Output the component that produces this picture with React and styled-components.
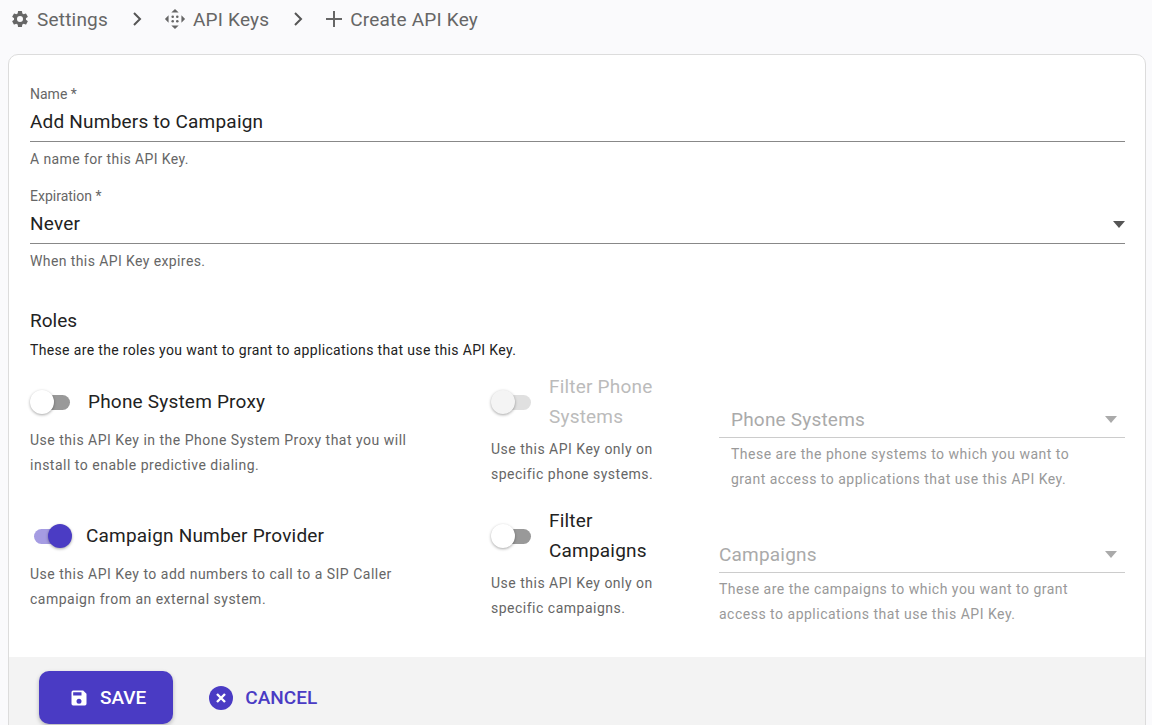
import React from 'react'
import styled, { createGlobalStyle } from 'styled-components'

const Global = createGlobalStyle`
  body { margin: 0; background: #fafafc; font-family: Roboto, "Liberation Sans", sans-serif; }
`

const Crumbs = styled.div`
  display: flex;
  align-items: center;
  height: 38px;
  padding-left: 10px;
  font-size: 19px;
  color: #666;
  gap: 8px;
  letter-spacing: 0.2px;
`
const Crumb = styled.span`
  display: flex;
  align-items: center;
  gap: 7px;
`
const Sep = styled.span`
  margin: 0 14px 0 16px;
  display: flex;
`

const Card = styled.div`
  margin: 16px 6px 10px 8px;
  border: 1px solid #dcdcdc;
  border-radius: 10px;
  background: #fff;
  overflow: hidden;
`
const Body = styled.div`
  padding: 29px 20px 30px 21px;
`
const Label = styled.div`
  font-size: 14px;
  color: #666;
  line-height: 20px;
  margin-bottom: 5px;
`
const Value = styled.div`
  font-size: 19px;
  color: #222;
  line-height: 26px;
  padding-bottom: 6px;
  border-bottom: 1px solid #888;
  display: flex;
  justify-content: space-between;
  align-items: center;
  letter-spacing: 0.2px;
`
const Helper = styled.div`
  font-size: 14px;
  color: #666;
  letter-spacing: 0.4px;
  margin-top: 7px;
  line-height: 20px;
  margin-bottom: ${p => p.$mb || 0}px;
`
const Heading = styled.div`
  font-size: 19px;
  color: #222;
  margin-top: 38px;
`
const Desc = styled.div`
  font-size: 14px;
  color: #222;
  margin-top: 10px;
  letter-spacing: 0.35px;
`
const Grid = styled.div`
  display: grid;
  grid-template-columns: 461px 228px 1fr;
  row-gap: 14px;
  margin-top: 14px;
`
const SwitchRow = styled.div`
  display: flex;
  align-items: center;
  gap: 18px;
  min-height: 60px;
  font-size: 19px;
  color: ${p => (p.$disabled ? '#bbb' : '#222')};
  line-height: 30px;
  letter-spacing: 0.2px;
`
const Track = styled.div`
  position: relative;
  width: 34px;
  height: 15px;
  border-radius: 8px;
  margin-left: ${p => (p.$on ? 4 : 6)}px;
  flex-shrink: 0;
  background: ${p => (p.$on ? '#a59ce2' : p.$disabled ? '#e0e0e0' : '#999')};
`
const Thumb = styled.div`
  position: absolute;
  top: -5px;
  left: ${p => (p.$on ? 14 : -6)}px;
  width: 24px;
  height: 24px;
  border-radius: 50%;
  background: ${p => (p.$on ? '#4b3cc4' : p.$disabled ? '#f4f4f4' : '#fff')};
  box-shadow: 0 1px 3px rgba(0,0,0,0.35);
`
const SmallText = styled.div`
  font-size: 14px;
  color: ${p => (p.$disabled ? '#999' : '#666')};
  letter-spacing: 0.5px;
  line-height: 25px;
  margin-top: ${p => p.$mt || 0}px;
  padding-left: ${p => p.$pl || 0}px;
`
const Col = styled.div``
const SelectBox = styled.div`
  margin-top: ${p => p.$mt || 36}px;
  padding: 0 8px 6px ${p => p.$pl || 0}px;
  border-bottom: 1px solid #ccc;
  font-size: 19px;
  color: #aaa;
  display: flex;
  justify-content: space-between;
  align-items: center;
  letter-spacing: 0.2px;
`
const Footer = styled.div`
  background: #f3f3f3;
  padding: 14px 30px 13px 30px;
  display: flex;
  align-items: center;
  gap: 30px;
`
const SaveBtn = styled.button`
  display: flex;
  align-items: center;
  gap: 11px;
  height: 53px;
  padding: 0 27px 0 30px;
  background: #4a3bc4;
  color: #fff;
  border: 0;
  border-radius: 10px;
  font: 500 19px Roboto, sans-serif;
  box-shadow: 0 2px 4px rgba(0,0,0,0.25);
`
const CancelBtn = styled.button`
  display: flex;
  align-items: center;
  gap: 12px;
  background: none;
  border: 0;
  color: #4a3bc4;
  font: 500 19px Roboto, sans-serif;
`

const Caret = ({ color = '#555' }) => (
  <svg width="12" height="7" viewBox="0 0 12 7"><path d="M0 0h12L6 7z" fill={color} /></svg>
)
const Chevron = () => (
  <svg width="10" height="14" viewBox="0 0 10 14"><path d="M2 1l6 6-6 6" stroke="#555" strokeWidth="2" fill="none" /></svg>
)

const Switch = ({ on, disabled }) => (
  <Track $on={on} $disabled={disabled}><Thumb $on={on} $disabled={disabled} /></Track>
)

export default function App() {
  return (
    <>
      <Global />
      <Crumbs>
        <Crumb>
          <svg width="20" height="20" viewBox="0 0 24 24" fill="#666"><path d="M19.14 12.94c.04-.3.06-.61.06-.94 0-.32-.02-.64-.07-.94l2.03-1.58a.49.49 0 0 0 .12-.61l-1.92-3.32a.49.49 0 0 0-.59-.22l-2.39.96c-.5-.38-1.030-.7-1.62-.94l-.36-2.54a.48.48 0 0 0-.48-.41h-3.84c-.24 0-.43.17-.47.41l-.36 2.54c-.59.24-1.13.57-1.62.94l-2.39-.96a.48.48 0 0 0-.59.22L2.74 8.87c-.12.21-.08.47.12.61l2.03 1.58c-.05.3-.09.63-.09.94s.02.64.07.94l-2.03 1.58a.49.49 0 0 0-.12.61l1.92 3.320c.12.22.37.29.59.22l2.39-.96c.5.38 1.03.7 1.62.94l.36 2.54c.05.24.24.41.48.41h3.84c.24 0 .44-.17.47-.41l.36-2.54c.59-.24 1.13-.56 1.62-.94l2.39.96c.22.08.47 0 .59-.22l1.92-3.32c.12-.22.07-.47-.12-.61l-2.01-1.58zM12 15.6A3.6 3.6 0 1 1 12 8.4a3.6 3.6 0 0 1 0 7.2z"/></svg>
          Settings
        </Crumb>
        <Sep><Chevron /></Sep>
        <Crumb>
          <svg width="22" height="22" viewBox="0 0 24 24" fill="#666"><path d="M12 1l4 4h-8zM12 23l-4-4h8zM1 12l4-4v8zM23 12l-4 4V8z"/><circle cx="9.5" cy="9.5" r="1.4"/><circle cx="14.5" cy="9.5" r="1.4"/><circle cx="9.5" cy="14.5" r="1.4"/><circle cx="14.5" cy="14.5" r="1.4"/></svg>
          API Keys
        </Crumb>
        <Sep><Chevron /></Sep>
        <Crumb>
          <svg width="18" height="18" viewBox="0 0 18 18"><path d="M9 1v16M1 9h16" stroke="#666" strokeWidth="2" /></svg>
          Create API Key
        </Crumb>
      </Crumbs>
      <Card>
        <Body>
          <Label>Name *</Label>
          <Value>Add Numbers to Campaign</Value>
          <Helper $mb={17}>A name for this API Key.</Helper>
          <Label>Expiration *</Label>
          <Value>Never<Caret /></Value>
          <Helper>When this API Key expires.</Helper>
          <Heading>Roles</Heading>
          <Desc>These are the roles you want to grant to applications that use this API Key.</Desc>
          <Grid>
            <Col>
              <SwitchRow><Switch />Phone System Proxy</SwitchRow>
              <SmallText $mt={-4}>Use this API Key in the Phone System Proxy that you will<br />install to enable predictive dialing.</SmallText>
            </Col>
            <Col>
              <SwitchRow $disabled><Switch disabled /><span>Filter Phone<br />Systems</span></SwitchRow>
              <SmallText $mt={5}>Use this API Key only on<br />specific phone systems.</SmallText>
            </Col>
            <Col>
              <SelectBox $pl={12}>Phone Systems<Caret color="#aaa" /></SelectBox>
              <SmallText $disabled $mt={4} $pl={12}>These are the phone systems to which you want to<br />grant access to applications that use this API Key.</SmallText>
            </Col>
            <Col>
              <SwitchRow><Switch on />Campaign Number Provider</SwitchRow>
              <SmallText $mt={-4}>Use this API Key to add numbers to call to a SIP Caller<br />campaign from an external system.</SmallText>
            </Col>
            <Col>
              <SwitchRow><Switch /><span>Filter<br />Campaigns</span></SwitchRow>
              <SmallText $mt={5}>Use this API Key only on<br />specific campaigns.</SmallText>
            </Col>
            <Col>
              <SelectBox $mt={37}>Campaigns<Caret color="#aaa" /></SelectBox>
              <SmallText $disabled $mt={4}>These are the campaigns to which you want to grant<br />access to applications that use this API Key.</SmallText>
            </Col>
          </Grid>
        </Body>
        <Footer>
          <SaveBtn>
            <svg width="20" height="20" viewBox="0 0 24 24" fill="#fff"><path d="M17 3H5a2 2 0 0 0-2 2v14a2 2 0 0 0 2 2h14a2 2 0 0 0 2-2V7l-4-4zm-5 16a3 3 0 1 1 0-6 3 3 0 0 1 0 6zm3-10H5V5h10v4z"/></svg>
            SAVE
          </SaveBtn>
          <CancelBtn>
            <svg width="24" height="24" viewBox="0 0 24 24"><circle cx="12" cy="12" r="12" fill="#4a3bc4"/><path d="M8 8l8 8M16 8l-8 8" stroke="#fff" strokeWidth="2.4"/></svg>
            CANCEL
          </CancelBtn>
        </Footer>
      </Card>
    </>
  )
}
